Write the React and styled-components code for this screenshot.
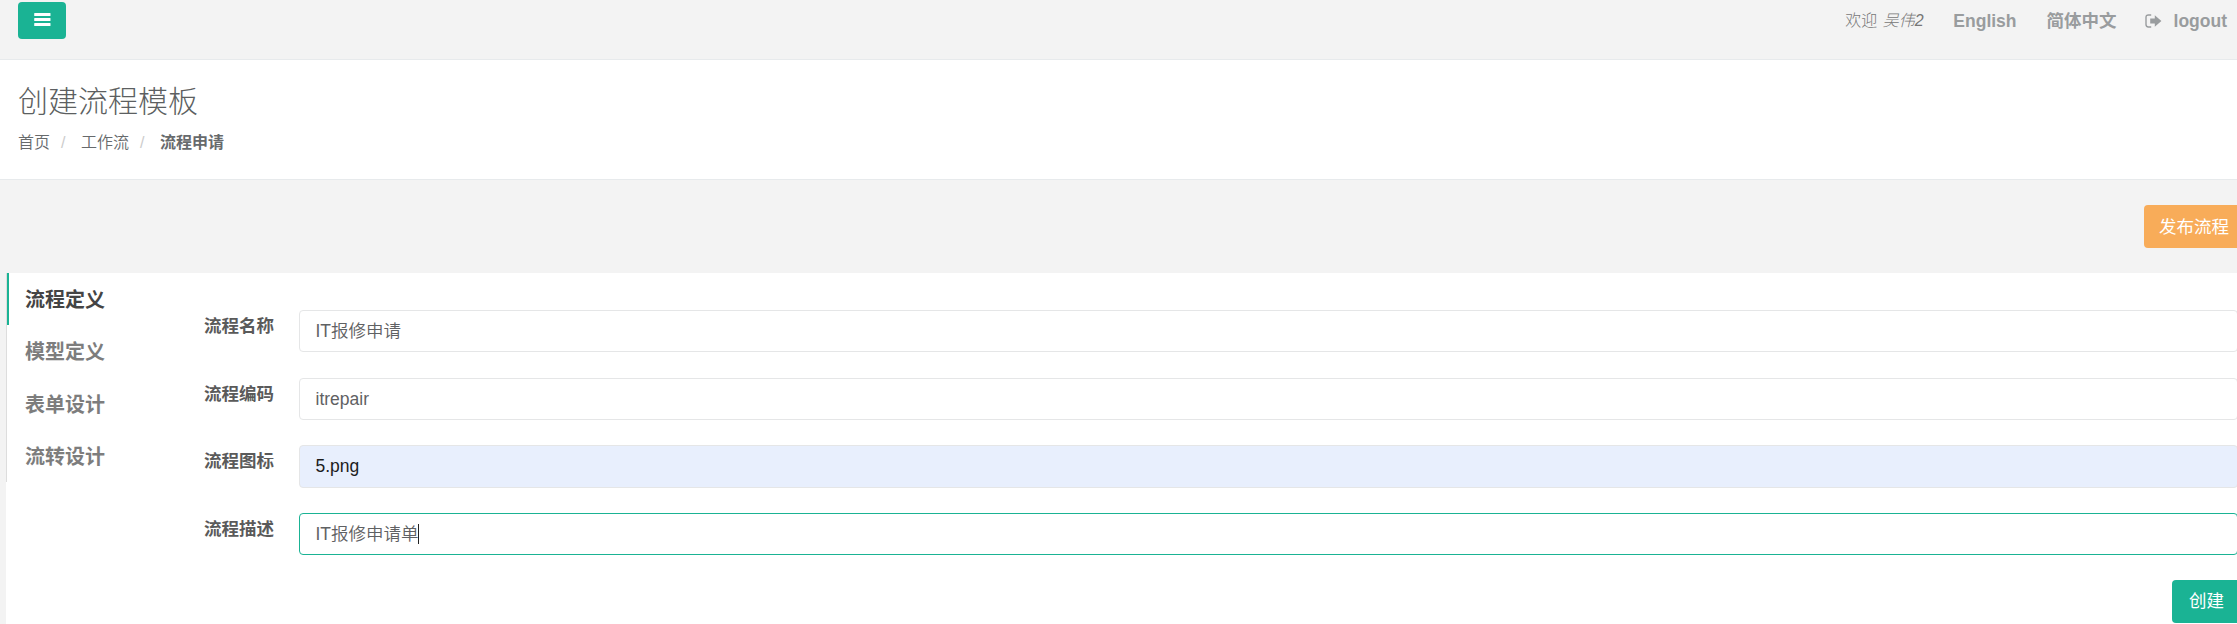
import React from "react";
import styled, { createGlobalStyle, css } from "styled-components";

const Global = createGlobalStyle`
  *, *::before { box-sizing: border-box; }
  html, body { margin: 0; padding: 0; overflow: hidden; }
  body {
    width: 2237px;
    height: 624px;
    background: #f3f3f3;
    color: #676a6c;
    font-family: "Liberation Sans", "Noto Sans CJK SC", sans-serif;
    font-size: 16px;
  }
`;

const Page = styled.div`
  width: 2237px;
  height: 624px;
  overflow: hidden;
  white-space: nowrap;
`;

const TopBar = styled.header`
  height: 60px;
  padding: 2px 10px 0 18px;
  display: flex;
  justify-content: space-between;
  align-items: flex-start;
  border-bottom: 1px solid #e7eaec;
`;

const Button = styled.button`
  display: flex;
  justify-content: center;
  align-items: center;
  border: 0;
  border-radius: 4px;
  padding: 0 2px 3px 0;
  color: #fff;
  font: inherit;
  font-size: 17.5px;
  flex: none;
  background: ${(p) => p.$color};
  width: ${(p) => p.$width}px;
  height: ${(p) => p.$height}px;
`;

const MenuButton = styled(Button)`
  padding: 0 0 1px 1px;
`;

const TopLinks = styled.nav`
  display: flex;
  align-items: center;
  height: 37px;
`;

const Welcome = styled.span`
  width: 108px;
  line-height: 24px;
  color: #777;
  font-weight: 300;
  em { font-size: 16px; margin-left: 1px; }
`;

const TopLink = styled.a`
  display: flex;
  align-items: center;
  color: #999c9e;
  font-size: 17.5px;
  line-height: 24px;
  font-weight: 700;
  margin-right: ${(p) => p.$gap || 0}px;
  svg { margin-right: 12px; }
`;

const Heading = styled.section`
  height: 120px;
  padding: 21px 18px 0;
  background: #fff;
  border-bottom: 1px solid #e7eaec;
`;

const Title = styled.h2`
  margin: 0;
  font-size: 30px;
  line-height: 42px;
  font-weight: 300;
  color: #5c5f61;
`;

const Crumbs = styled.ol`
  display: flex;
  margin: 8px 0 0;
  padding: 0;
  list-style: none;
  line-height: 24px;
`;

const Crumb = styled.li`
  font-weight: ${(p) => (p.$current ? 700 : 350)};
  &:not(:first-child)::before {
    content: "/";
    display: inline-block;
    width: 31px;
    padding-left: 11px;
    color: #ccc;
    font-weight: 400;
  }
`;

const Actions = styled.div`
  height: 93px;
  padding: 25px 0 0 2144px;
`;

const Panel = styled.main`
  display: flex;
  margin-left: 6px;
  height: 351px;
  background: #fff;
`;

const Tabs = styled.ul`
  flex: none;
  width: 198px;
  height: 209px;
  margin: 0;
  padding: 0;
  list-style: none;
  border-left: 1px solid #ddd;
`;

const Tab = styled.li`
  height: 52.3px;
  padding-left: 16px;
  border-left: 2px solid transparent;
  font-size: 20px;
  line-height: 54px;
  font-weight: 700;
  color: #7d7d7d;
  ${(p) =>
    p.$active &&
    css`
      border-left-color: #1ab394;
      color: #444;
    `}
`;

const Form = styled.form`
  flex: none;
  padding-top: 37px;
`;

const Field = styled.div`
  display: flex;
  height: 67.6px;
`;

const Label = styled.label`
  flex: none;
  width: 95px;
  padding-top: 4px;
  font-size: 17.5px;
  line-height: 25px;
  font-weight: 700;
  color: #5a5a5a;
`;

const Input = styled.div`
  display: flex;
  align-items: center;
  flex: none;
  width: 1939px;
  height: 42.4px;
  padding-left: 15.5px;
  border: 1px solid ${(p) => (p.$focus ? "#1ab394" : "#e5e6e7")};
  border-radius: 4px;
  background: ${(p) => (p.$filled ? "#e8effd" : "#fff")};
  color: ${(p) => (p.$filled ? "#1c1c1c" : "#5f6163")};
  font-size: 17.5px;
  font-weight: 350;
  line-height: 26px;
`;

const Caret = styled.span`
  width: 1px;
  height: 20px;
  margin-left: -1px;
  background: #222;
`;

const Submit = styled.div`
  padding-left: 1968px;
  margin-top: -0.4px;
`;

const LogoutIcon = () => (
  <svg width="17" height="14" viewBox="0 0 17 14">
    <path d="M6.2 1H3.4Q1 1 1 3.4v7.2Q1 13 3.4 13h2.8" fill="none" stroke="#999c9e" strokeWidth="1.4" />
    <path d="M5.2 4.4h4.6V1.2L16.4 7l-6.6 5.8V9.6H5.2z" fill="#999c9e" />
  </svg>
);

const MenuIcon = () => (
  <svg width="17" height="14" viewBox="0 0 17 14" fill="#fff">
    <rect x=".2" y="0" width="16.3" height="3" rx=".6" />
    <rect x=".2" y="5" width="16.3" height="3" rx=".6" />
    <rect x=".2" y="10" width="16.3" height="3" rx=".6" />
  </svg>
);

const tabs = ["流程定义", "模型定义", "表单设计", "流转设计"];

const fields = [
  { label: "流程名称", value: "IT报修申请" },
  { label: "流程编码", value: "itrepair" },
  { label: "流程图标", value: "5.png", filled: true },
  { label: "流程描述", value: "IT报修申请单", focus: true },
];

export default function App() {
  return (
    <Page>
      <Global />
      <TopBar>
        <MenuButton $color="#1ab394" $width={48} $height={37}>
          <MenuIcon />
        </MenuButton>
        <TopLinks>
          <Welcome>欢迎 <em>吴伟2</em></Welcome>
          <TopLink $gap={30}>English</TopLink>
          <TopLink $gap={28}>简体中文</TopLink>
          <TopLink><LogoutIcon />logout</TopLink>
        </TopLinks>
      </TopBar>
      <Heading>
        <Title>创建流程模板</Title>
        <Crumbs>
          <Crumb>首页</Crumb>
          <Crumb>工作流</Crumb>
          <Crumb $current>流程申请</Crumb>
        </Crumbs>
      </Heading>
      <Actions>
        <Button $color="#f8ac59" $width={102} $height={43}>发布流程</Button>
      </Actions>
      <Panel>
        <Tabs>
          {tabs.map((name, i) => (
            <Tab key={name} $active={i === 0}>{name}</Tab>
          ))}
        </Tabs>
        <Form>
          {fields.map((f) => (
            <Field key={f.label}>
              <Label>{f.label}</Label>
              <Input $filled={f.filled} $focus={f.focus}>
                {f.value}
                {f.focus && <Caret />}
              </Input>
            </Field>
          ))}
          <Submit>
            <Button type="button" $color="#1ab394" $width={71} $height={43}>创建</Button>
          </Submit>
        </Form>
      </Panel>
    </Page>
  );
}
